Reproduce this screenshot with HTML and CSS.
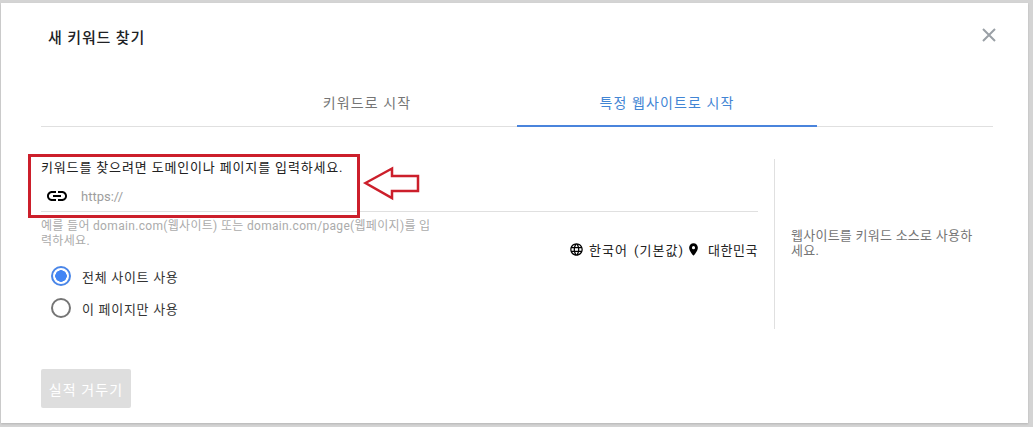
FILE: index.html
```html
<!DOCTYPE html>
<html lang="ko">
<head>
<meta charset="utf-8">
<title>새 키워드 찾기</title>
<link rel="stylesheet" href="styles.css">
</head>
<body>
<div class="dialog">
  <header class="head">
    <h1 class="title">새 키워드 찾기</h1>
    <svg class="close" viewBox="0 0 14 14" width="14" height="14"><path d="M1 1L13 13M13 1L1 13" fill="none" stroke="#9aa0a6" stroke-width="2"/></svg>
  </header>
  <nav class="tabs">
    <div class="tab">키워드로 시작</div>
    <div class="tab active">특정 웹사이트로 시작</div>
  </nav>
  <main class="content">
    <section class="form">
      <p class="label">키워드를 찾으려면 도메인이나 페이지를 입력하세요.</p>
      <div class="field">
        <svg class="link" viewBox="0 0 24 24" width="24" height="24"><path d="M3.9 12c0-1.71 1.39-3.1 3.1-3.1h4V7H7c-2.76 0-5 2.24-5 5s2.24 5 5 5h4v-1.9H7c-1.71 0-3.1-1.39-3.1-3.1zM8 13h8v-2H8v2zm9-6h-4v1.9h4c1.71 0 3.1 1.39 3.1 3.1s-1.39 3.1-3.1 3.1h-4V17h4c2.76 0 5-2.24 5-5s-2.24-5-5-5z"/></svg>
        <span class="placeholder">https://</span>
      </div>
      <div class="below">
        <div class="options">
          <p class="help">예를 들어 domain.com(웹사이트) 또는 domain.com/page(웹페이지)를 입력하세요.</p>
          <div class="radio on"><span class="dot"></span>전체 사이트 사용</div>
          <div class="radio"><span class="dot"></span>이 페이지만 사용</div>
        </div>
        <div class="locale">
          <svg class="globe" viewBox="0 0 24 24" width="15" height="15"><path d="M11.99 2C6.47 2 2 6.48 2 12s4.47 10 9.99 10C17.52 22 22 17.52 22 12S17.52 2 11.99 2zm6.93 6h-2.95c-.32-1.25-.78-2.45-1.38-3.56 1.84.63 3.37 1.91 4.33 3.56zM12 4.04c.83 1.2 1.48 2.53 1.91 3.96h-3.82c.43-1.43 1.08-2.76 1.91-3.96zM4.26 14C4.1 13.36 4 12.69 4 12s.1-1.36.26-2h3.38c-.08.66-.14 1.32-.14 2s.06 1.34.14 2H4.26zm.82 2h2.95c.32 1.25.78 2.45 1.38 3.56-1.84-.63-3.37-1.9-4.33-3.56zm2.95-8H5.08c.96-1.66 2.49-2.93 4.33-3.56C8.81 5.55 8.35 6.75 8.03 8zM12 19.96c-.83-1.2-1.48-2.53-1.91-3.96h3.82c-.43 1.43-1.08 2.76-1.91 3.96zM14.34 14H9.66c-.09-.66-.16-1.32-.16-2s.07-1.35.16-2h4.68c.09.65.16 1.32.16 2s-.07 1.34-.16 2zm.25 5.56c.6-1.11 1.06-2.31 1.38-3.56h2.95c-.96 1.65-2.49 2.93-4.33 3.56zM16.36 14c.08-.66.14-1.32.14-2s-.06-1.34-.14-2h3.38c.16.64.26 1.31.26 2s-.1 1.36-.26 2h-3.38z"/></svg>
          <span class="lang">한국어 (기본값)</span>
          <svg viewBox="0 0 24 24" width="15" height="15"><path d="M12 2C8.13 2 5 5.13 5 9c0 5.25 7 13 7 13s7-7.75 7-13c0-3.87-3.13-7-7-7zm0 9.5a2.5 2.5 0 1 1 0-5 2.5 2.5 0 0 1 0 5z"/></svg>
          <span class="region">대한민국</span>
        </div>
      </div>
    </section>
    <aside class="side">웹사이트를 키워드 소스로 사용하세요.</aside>
  </main>
  <footer class="foot"><button class="submit" type="button">실적 거두기</button></footer>
</div>
<div class="callout"></div>
<svg class="arrow" viewBox="0 0 58 36" width="58" height="36"><path d="M3.5 17L30 2.5V10H56V25H30V32Z" fill="#fff" stroke="#cc1f2b" stroke-width="2.5"/></svg>
</body>
</html>
```
FILE: styles.css
```css
* { box-sizing: border-box; }
html, body { margin: 0; height: 427px; overflow: hidden; }
body {
  background: #d4d4d4;
  padding: 3px 5px 4px 1px;
  font-family: Roboto, "Noto Sans CJK KR", sans-serif;
  color: #212121;
  position: relative;
}
.dialog {
  background: #fff;
  height: 420px;
  display: flex;
  flex-direction: column;
  padding: 0 35px 0 40px;
  box-shadow: 0 1px 2px rgba(0,0,0,.15);
}
.head { height: 67px; display: flex; justify-content: space-between; align-items: center; padding: 0 0 0 7px; margin-right: -3px; }
.title { margin: 0; font-size: 15px; font-weight: 500; letter-spacing: .85px; color: #202124; }
.close { display: block; margin-bottom: 3px; }
.tabs { display: flex; justify-content: center; height: 57px; border-bottom: 1px solid #e0e0e0; }
.tab { width: 300px; text-align: center; font-size: 14px; letter-spacing: 1.1px; color: #757575; padding-top: 24px; line-height: 18px; }
.tab.active { color: #4285d4; border-bottom: 2px solid #4a84dc; height: 57px; }
.content { display: flex; height: 170px; margin-top: 32px; }
.form { width: 717px; flex: none; }
.label { margin: 0; font-size: 13px; letter-spacing: .85px; line-height: 18px; color: #212121; }
.field { height: 35px; border-bottom: 1px solid #e0e0e0; display: flex; align-items: center; padding: 4px 0 0 4px; }
.link { margin-right: 12px; flex: none; }
.placeholder { font-size: 13px; color: #9e9e9e; }
.below { display: flex; justify-content: space-between; }
.options { width: 392px; }
.help { margin: 7px 0 0; font-size: 12px; line-height: 15px; letter-spacing: .32px; color: #ababab; height: 41px; }
.radio { display: flex; align-items: center; height: 32px; font-size: 13px; letter-spacing: .7px; color: #333; padding-left: 10px; }
.dot { width: 20px; height: 20px; border-radius: 50%; border: 2px solid #757575; margin-right: 11px; flex: none; }
.radio.on .dot { border-color: #4a86e8; background: radial-gradient(circle, #4285f4 0 5.5px, #fff 6px); }
.locale { display: flex; align-items: center; height: 20px; margin-top: 27px; font-size: 13px; color: #212121; }
.locale svg { margin-right: 4px; fill: #000; flex: none; }
.locale .globe { margin-right: 5px; }
.lang { margin-right: 2px; letter-spacing: 1px; word-spacing: 2px; }
.region { letter-spacing: .55px; margin-left: 3px; }
.side { width: 219px; margin-left: 16px; border-left: 1px solid #e0e0e0; padding: 69px 15px 0 16px; font-size: 13px; line-height: 15px; letter-spacing: .25px; color: #757575; }
.foot { margin-top: 40px; }
.submit { display: block; width: 90px; height: 39px; border: 0; border-radius: 2px; background: #dedede; color: #fff; font: inherit; font-size: 14px; letter-spacing: 1.1px; padding: 0; }
.callout { position: absolute; left: 28px; top: 154px; width: 332px; height: 64px; border: 3px solid #cc1f2b; }
.arrow { position: absolute; left: 362px; top: 166px; }
```
